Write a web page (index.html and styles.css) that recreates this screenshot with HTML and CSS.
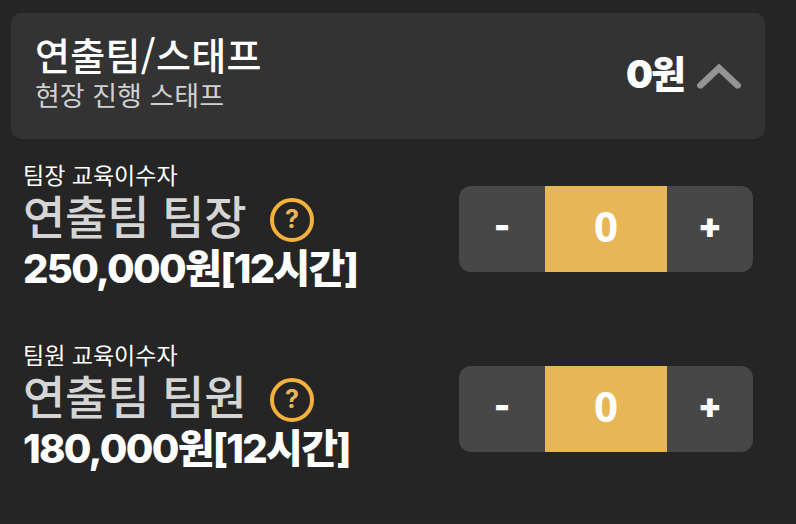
FILE: index.html
```html
<!DOCTYPE html>
<html lang="ko">
<head>
    <meta charset="UTF-8">
    <meta name="viewport" content="width=device-width, initial-scale=1.0">
    <title>연출팀/스태프</title>
    <link rel="stylesheet" href="styles.css">
</head>
<body>
    <div class="category">
        <div class="category-text">
            <h1 class="category-title">연출팀/스태프</h1>
            <p class="category-desc">현장 진행 스태프</p>
        </div>
        <div class="category-total">0원</div>
        <svg class="arrow" width="46" height="28" viewBox="0 0 46 28">
            <path d="M1 22.3 L23 1.5 L45 22.3 V24.5 L43 26.5 H40 L23 10.5 L6 26.5 H3 L1 24.5 Z"/>
        </svg>
    </div>

    <div class="item">
        <div class="item-info">
            <p class="item-note">팀장 교육이수자</p>
            <div class="item-row">
                <h2 class="item-name">연출팀 팀장</h2>
                <button class="help">?</button>
            </div>
            <p class="item-price">250,000원[12시간]</p>
        </div>
        <div class="counter">
            <button class="counter-btn">-</button>
            <div class="counter-value">0</div>
            <button class="counter-btn">+</button>
        </div>
    </div>

    <div class="item">
        <div class="item-info">
            <p class="item-note">팀원 교육이수자</p>
            <div class="item-row">
                <h2 class="item-name">연출팀 팀원</h2>
                <button class="help">?</button>
            </div>
            <p class="item-price">180,000원[12시간]</p>
        </div>
        <div class="counter">
            <button class="counter-btn">-</button>
            <div class="counter-value">0</div>
            <button class="counter-btn">+</button>
        </div>
    </div>
</body>
</html>
```

FILE: styles.css
```css
* {
    box-sizing: border-box;
}
body {
    margin: 0;
    padding: 13px 31px 0 11px;
    height: 524px;
    overflow: hidden;
    background-color: #252525;
    color: #fff;
    font-family: "Noto Sans CJK KR", sans-serif;
}
h1, h2, p {
    margin: 0;
    white-space: nowrap;
}
button {
    border: none;
    padding: 0;
    color: inherit;
    cursor: pointer;
}

/* Category header */
.category {
    display: flex;
    align-items: center;
    height: 126px;
    padding: 0 23px 0 24px;
    border-radius: 10px;
    background-color: #333;
}
.category-text {
    flex: 1;
    padding-bottom: 4px;
}
.category-title {
    font-size: 38px;
    font-weight: 500;
    line-height: 40px;
    letter-spacing: 0.3px;
}
.category-desc {
    padding-top: 2px;
    color: #d0d0d0;
    font-size: 27px;
    font-weight: 400;
    line-height: 38px;
}
.category-total {
    margin-right: 12px;
    padding-bottom: 4px;
    font-family: "Inter", "Noto Sans CJK KR", sans-serif;
    font-size: 38px;
    font-weight: 900;
    line-height: 40px;
    letter-spacing: -2px;
}
.arrow {
    fill: #949494;
}

/* Staff items */
.item {
    display: flex;
    justify-content: space-between;
    height: 180px;
    padding: 20px 12px 0 12px;
}
.item-note {
    font-size: 23px;
    line-height: 30px;
}
.item-row {
    display: flex;
    align-items: center;
    height: 50px;
}
.item-name {
    width: 247px;
    color: #d5d5d5;
    font-size: 46px;
    font-weight: 500;
    line-height: 50px;
    letter-spacing: -0.2px;
}
.help {
    width: 44px;
    height: 44px;
    margin-top: 12px;
    padding-bottom: 2px;
    border: 4px solid #f5b13b;
    border-radius: 50%;
    background: none;
    color: #e7b656;
    font-family: "Inter", sans-serif;
    font-size: 25px;
    font-weight: 700;
    line-height: 32px;
}
.item-price {
    padding-top: 5px;
    font-family: "Inter", "Noto Sans CJK KR", sans-serif;
    font-size: 40px;
    font-weight: 800;
    line-height: 50px;
    letter-spacing: -1.7px;
}
.counter {
    display: flex;
    width: 294px;
    height: 86px;
    margin-top: 27px;
    border-radius: 12px;
    overflow: hidden;
}
.counter-btn {
    width: 86px;
    padding-bottom: 8px;
    background-color: #474747;
    font-family: "Inter", sans-serif;
    font-size: 35px;
    font-weight: 900;
}
.counter-value {
    flex: 1;
    background-color: #e7b656;
    font-family: "Open Sans", sans-serif;
    font-size: 42px;
    font-weight: 700;
    line-height: 79px;
    text-align: center;
}
```
